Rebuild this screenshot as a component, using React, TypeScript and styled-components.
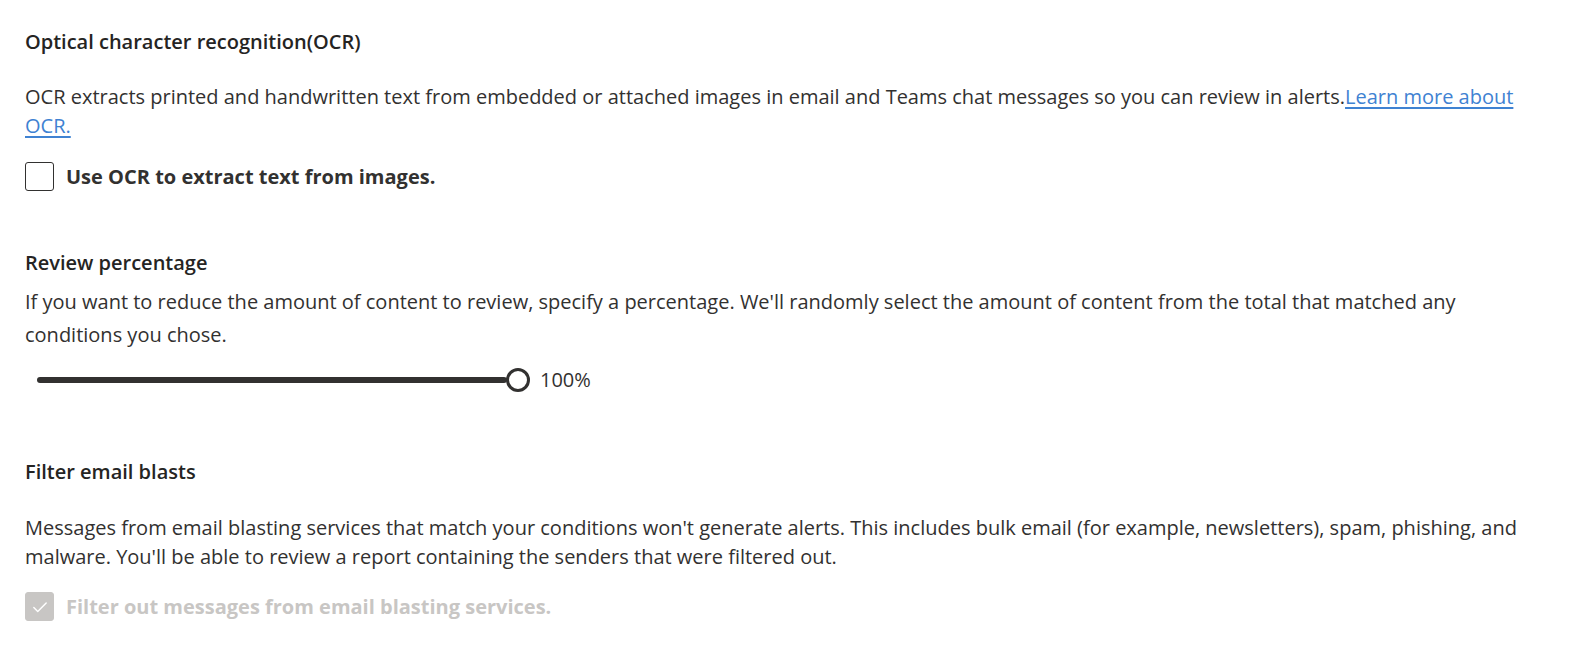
import React from "react";
import styled, { createGlobalStyle } from "styled-components";

const GlobalStyle = createGlobalStyle`
  html, body {
    margin: 0;
    padding: 0;
    background: #ffffff;
  }
  body {
    font-family: "Open Sans", "Noto Sans", Arial, sans-serif;
    color: #323130;
  }
`;

const Page = styled.div`
  display: flex;
  flex-direction: column;
  padding: 30px 40px 40px 25px;
  width: 1576px;
  box-sizing: border-box;
`;

const Section = styled.section<{ $gapAfter: number }>`
  display: flex;
  flex-direction: column;
  margin-bottom: ${(p) => p.$gapAfter}px;
`;

const Heading = styled.h2<{ $gap: number }>`
  margin: 0 0 ${(p) => p.$gap}px 0;
  font-size: 20px;
  font-weight: 600;
  line-height: 24px;
  color: #252423;
`;

const Body = styled.p<{ $lh: number; $gap: number }>`
  margin: 0 0 ${(p) => p.$gap}px 0;
  font-size: 20px;
  font-weight: 400;
  line-height: ${(p) => p.$lh}px;
  color: #323130;
`;

const Link = styled.a`
  color: #3f82d2;
  text-decoration: underline;
  text-underline-offset: 3px;
  cursor: pointer;
`;

const CheckRow = styled.label<{ $disabled?: boolean }>`
  display: flex;
  align-items: center;
  gap: 12px;
  font-size: 20px;
  font-weight: 700;
  line-height: 29px;
  color: ${(p) => (p.$disabled ? "#c8c6c4" : "#323130")};
  cursor: ${(p) => (p.$disabled ? "default" : "pointer")};
`;

const Box = styled.span<{ $checked?: boolean; $disabled?: boolean }>`
  display: flex;
  align-items: center;
  justify-content: center;
  width: 29px;
  height: 29px;
  box-sizing: border-box;
  border-radius: 3px;
  border: 1.5px solid ${(p) => (p.$disabled ? "#c8c6c4" : "#323130")};
  background: ${(p) => (p.$disabled ? "#c8c6c4" : "#ffffff")};
  flex-shrink: 0;
`;

const SliderRow = styled.div`
  display: flex;
  align-items: center;
  height: 24px;
  padding-left: 12px;
`;

const Track = styled.div`
  width: 470px;
  height: 6px;
  border-radius: 3px;
  background: #323130;
`;

const Thumb = styled.div`
  width: 24px;
  height: 24px;
  box-sizing: border-box;
  border-radius: 50%;
  border: 3px solid #323130;
  background: #ffffff;
  margin-left: -1px;
`;

const SliderValue = styled.span`
  margin-left: 10px;
  font-size: 20px;
  line-height: 24px;
  color: #323130;
`;

const CheckMark = () => (
  <svg width="18" height="18" viewBox="0 0 16 16" fill="none">
    <path d="M2.5 8.5 L6 12 L13.5 4.5" stroke="#ffffff" strokeWidth="1.3" strokeLinecap="round" strokeLinejoin="round" />
  </svg>
);

export default function App() {
  return (
    <>
      <GlobalStyle />
      <Page>
        <Section $gapAfter={60}>
          <Heading $gap={28}>Optical character recognition(OCR)</Heading>
          <Body $lh={29} $gap={22}>
            OCR extracts printed and handwritten text from embedded or attached images in email and Teams chat
            messages so you can review in alerts.<Link>Learn more about OCR.</Link>
          </Body>
          <CheckRow>
            <Box />
            Use OCR to extract text from images.
          </CheckRow>
        </Section>

        <Section $gapAfter={68}>
          <Heading $gap={10}>Review percentage</Heading>
          <Body $lh={33} $gap={17}>
            If you want to reduce the amount of content to review, specify a percentage. We'll randomly select the
            amount of content from the total that matched any conditions you chose.
          </Body>
          <SliderRow>
            <Track />
            <Thumb />
            <SliderValue>100%</SliderValue>
          </SliderRow>
        </Section>

        <Section $gapAfter={0}>
          <Heading $gap={29}>Filter email blasts</Heading>
          <Body $lh={29} $gap={21}>
            Messages from email blasting services that match your conditions won't generate alerts. This includes bulk
            email (for example, newsletters), spam, phishing, and malware. You'll be able to review a report
            containing the senders that were filtered out.
          </Body>
          <CheckRow $disabled>
            <Box $checked $disabled>
              <CheckMark />
            </Box>
            Filter out messages from email blasting services.
          </CheckRow>
        </Section>
      </Page>
    </>
  );
}
